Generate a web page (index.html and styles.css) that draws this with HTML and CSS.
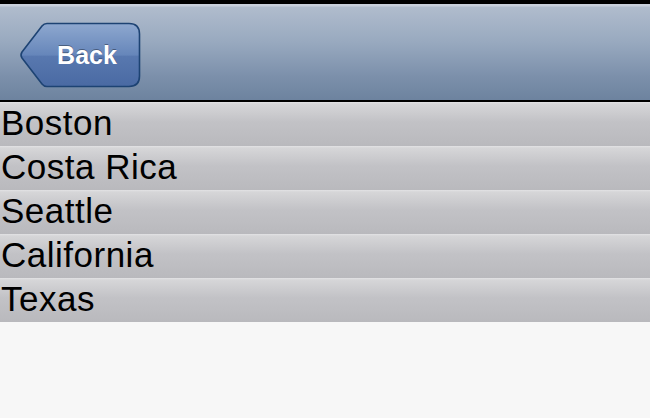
FILE: index.html
```html
<!DOCTYPE html>
<html>
<head>
<meta charset="utf-8">
<link rel="stylesheet" href="styles.css">
</head>
<body>
<div class="page">
  <header class="toolbar">
    <a class="back">
      <svg class="back-shape" viewBox="0 0 122 66" width="122" height="66">
        <defs>
          <linearGradient id="bg" x1="0" y1="0" x2="0" y2="1">
            <stop offset="0" stop-color="#8ea8cf"/>
            <stop offset="0.5" stop-color="#6686ba"/>
            <stop offset="0.52" stop-color="#5878af"/>
            <stop offset="1" stop-color="#4a6aa3"/>
          </linearGradient>
        </defs>
        <path d="M28 1.5 H110 Q120.5 1.5 120.5 12 V54 Q120.5 64.5 110 64.5 H28 Q25 64.5 23 62 L3 36 Q1 33 3 30 L23 4 Q25 1.5 28 1.5 Z" fill="url(#bg)" stroke="#1d4373" stroke-width="1.6"/>
      </svg>
      <span class="back-label">Back</span>
    </a>
  </header>
  <ul class="list">
    <li class="row">Boston</li>
    <li class="row">Costa Rica</li>
    <li class="row">Seattle</li>
    <li class="row">California</li>
    <li class="row">Texas</li>
  </ul>
</div>
</body>
</html>
```
FILE: styles.css
```css
html, body {
  margin: 0;
  padding: 0;
  background: #f7f7f7;
  font-family: "Liberation Sans", Arial, sans-serif;
}
.page {
  width: 650px;
  height: 418px;
  overflow: hidden;
}
.toolbar {
  height: 96px;
  border-top: 4px solid #000;
  border-bottom: 2px solid #000;
  background: linear-gradient(#c9d0dc 0px, #c9d0dc 2px, #b0bccd 3px, #98a9bf 40%, #7c90ab 75%, #6d839f 100%);
  display: flex;
  align-items: center;
  padding-left: 19px;
}
.back {
  position: relative;
  width: 122px;
  height: 66px;
  display: flex;
  align-items: center;
  justify-content: center;
  padding-left: 14px;
  box-sizing: border-box;
  margin-top: 6px;
}
.back-shape {
  position: absolute;
  left: 0;
  top: 0;
}
.back-label {
  position: relative;
  color: #fff;
  font-weight: bold;
  font-size: 25px;
  text-shadow: 0 -1px 0 rgba(0, 0, 0, 0.35);
}
.list {
  list-style: none;
  margin: 0;
  padding: 0;
}
.row {
  height: 44px;
  box-sizing: border-box;
  padding-left: 1px;
  font-size: 35px;
  letter-spacing: 0.5px;
  line-height: 42px;
  color: #000;
  background: linear-gradient(#e3e3e5 0px, #d6d6d8 2px, #c2c2c6 45%, #b9b9bd 100%);
}
```
